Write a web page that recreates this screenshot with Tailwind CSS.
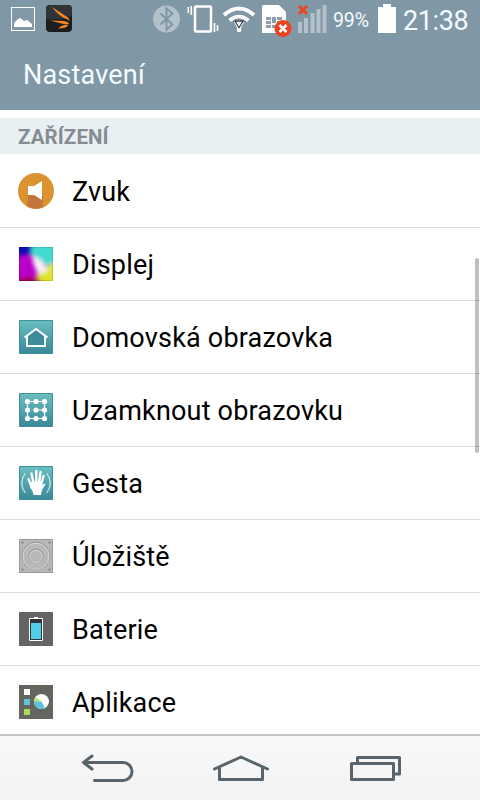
<!DOCTYPE html>
<html lang="cs">
<head>
<meta charset="utf-8">
<title>Nastavení</title>
<script src="https://cdn.jsdelivr.net/npm/@tailwindcss/browser@4"></script>
</head>
<body class="w-[480px] h-[800px] overflow-hidden bg-white font-[Roboto,'Noto_Sans',sans-serif]">
<div class="relative flex flex-col h-[800px] w-[480px] overflow-hidden">
  <header class="h-[110px] shrink-0 bg-[#8097a6] text-[#f3fbff]">
    <div class="flex h-[39px] items-start">
      <svg class="ml-[11px] mt-[7px] shrink-0" width="24" height="24" viewBox="0 0 24 24"><rect x=".5" y=".5" width="23" height="23" fill="#8499a7" stroke="#f7fcff"/><path d="M3 20v-4l4-4 2-1 4 3 3-1 5 4v3z" fill="#fff"/></svg>
      <svg class="ml-[11px] mt-[5px] shrink-0" width="26" height="27" viewBox="0 0 26 27"><rect width="26" height="27" rx="4" fill="#1b1d1f"/><path d="M0 12V4q0-4 4-4h18q4 0 4 4v7q-12 5-26 3z" fill="#303437"/><path d="M6 2l16 10.500q1.500 1.500 1.500 3.500-2-2-5.500-3Q11 9 6 2zM4 15.500l14 .5q4 .5 5.500 2.500-4 1.500-8 0zM22.500 19.500q-1.500 3-4.500 3.500-3 0-6 1l3-3q3-1.500 7.500-1.500z" fill="#f5861f"/></svg>
      <svg class="ml-[81px] mt-[5px] shrink-0" width="27" height="28" viewBox="0 0 27 28"><circle cx="13.500" cy="14" r="13.500" fill="#b3c1ca"/><path d="M7.500 8.500l12 11-6 5v-21l6 5-12 11" fill="none" stroke="#8097a6" stroke-width="2"/></svg>
      <svg class="ml-[7px] mt-[5px] shrink-0" width="32" height="28" viewBox="0 0 32 28" fill="none" stroke="#fff"><rect x="8" y="1.500" width="16" height="25" rx="1" stroke-width="2.500"/><path d="M1.300 2v6M4.300 1v9M27.500 18v9M30.500 20v6" stroke-width="1.600"/></svg>
      <svg class="ml-[3px] mt-[5px] shrink-0" width="34" height="28" viewBox="0 0 34 28" fill="none" stroke="#fff"><path d="M2 10q15-13 30 0" stroke-width="4"/><path d="M7.500 15.500q9.500-8 19 0" stroke-width="3.600"/><path d="M12 17q5-3 10 0l-5 9.500z" fill="#fff" stroke="none"/><circle cx="17" cy="25" r="2.300" fill="#fff" stroke="none"/><path d="M13 16.200h8l-4 6.500z" fill="#f3f7f9" stroke="#30383c" stroke-width="1.200"/></svg>
      <svg class="ml-[6px] mt-[5px] shrink-0" width="30" height="33" viewBox="0 0 30 33"><path d="M2 0h15l7 7v21H0V2q0-2 2-2z" fill="#fff"/><path d="M4 12h5v3H4zM10 12h4v6h-4zM15 12h5v3h-5zM4 16h5v3H4zM4 20h5v3H4zM10 20h4v3h-4zM15 16h5v7h-5z" fill="#8ca0ad"/><circle cx="21" cy="23.500" r="8.500" fill="#ef4320"/><path d="M17.500 20l7 7m0-7l-7 7" stroke="#fff" stroke-width="2.500"/></svg>
      <svg class="ml-[6px] mt-[5px] shrink-0" width="29" height="28" viewBox="0 0 29 28"><path d="M0 17h4v11H0zM6 13h4v15H6zM12.500 8h4v20h-4zM18.500 4h4v24h-4zM24.500 0h4v28h-4z" fill="#b3c1ca"/><path d="M1 1l8 8m0-8L1 9" stroke="#ef4320" stroke-width="2.800"/></svg>
      <div class="ml-[6px] mt-[9px] w-[45px] text-[19.500px] leading-[24px] tracking-[-0.1px]">99%</div>
      <svg class="mt-[4px] shrink-0" width="18" height="29" viewBox="0 0 18 29"><path d="M5 0h8v3h5v26H0V3h5z" fill="#fff"/></svg>
      <div class="ml-[7px] mt-[6px] text-[27px] leading-[30px] tracking-[-0.4px]">21:38</div>
    </div>
    <h1 class="pl-[23px] pt-[20px] text-[27px] leading-[32px] tracking-[0.2px]">Nastavení</h1>
  </header>
  <main class="relative h-[624px] shrink-0 overflow-hidden pt-[8px]">
    <h2 class="h-[36px] bg-[#e9f0f4] pl-[18px] text-[20.5px] font-bold leading-[38px] tracking-[0.1px] text-[#858d93] mb-px">ZAŘÍZENÍ</h2>
    <ul class="text-[27px] leading-[32px] tracking-[0.19px] text-black">
      <li class="flex h-[73px] items-center gap-[18px] border-b border-[#dcdcdc] pl-[18px]">
        <svg width="36" height="36" viewBox="0 0 36 36"><circle cx="18" cy="18" r="18" fill="#db932f"/><path d="M10 22v5q-1 4-1 6 8 5 16 1V23z" fill="#c4753a"/><path d="M10 13h6l8-5v19l-8-5h-6z" fill="#fff"/></svg><span class="pt-[2px]">Zvuk</span></li>
      <li class="flex h-[73px] items-center gap-[19px] border-b border-[#dcdcdc] pl-[19px]">
        <svg width="34" height="34" viewBox="0 0 34 34"><defs><filter id="b" x="-30%" y="-30%" width="160%" height="160%"><feGaussianBlur stdDeviation="2"/></filter><clipPath id="c"><path d="M0 0h34v34H0z"/></clipPath></defs><g clip-path="url(#c)"><path d="M0 0h34v34H0z" fill="#b900c9"/><g filter="url(#b)"><path d="M-6-6h20L12 7-6 9z" fill="#0808b4"/><path d="M13-6h27v32L12 9z" fill="#43d9d1"/><path d="M34 16l6-1v26H20l-3-16z" fill="#dce42b"/><path d="M-5 33l18-2 9 3v7H-5z" fill="#9c0030"/><path d="M13 9l6 2q7 5 10 13l-9 3q-6-7-7-18z" fill="#f7f0f8"/></g></g><path d="M.5.500h33v33H.5z" fill="none" stroke="#000" stroke-opacity=".12"/></svg><span class="pt-[2px]">Displej</span></li>
      <li class="flex h-[73px] items-center gap-[19px] border-b border-[#dcdcdc] pl-[19px]">
        <svg width="34" height="34" viewBox="0 0 34 34"><defs><linearGradient id="t" x2="0" y2="1"><stop stop-color="#6abfc1"/><stop offset="1" stop-color="#39889a"/></linearGradient></defs><path d="M.5.500h33v33H.5z" fill="url(#t)" stroke="#438f97"/><path d="M8 16v10h18V16l-9-7z" fill="#3e8b99"/><path d="M5.500 17.500L17 9l11.500 8.500M8 16v10h18V16" fill="none" stroke="#fff" stroke-width="2"/></svg><span class="pt-[2px]">Domovská obrazovka</span></li>
      <li class="flex h-[73px] items-center gap-[19px] border-b border-[#dcdcdc] pl-[19px]">
        <svg width="34" height="34" viewBox="0 0 34 34"><path d="M.5.500h33v33H.5z" fill="url(#t)" stroke="#438f97"/><path d="M8.500 17V8.500h17M17 17h8.500v8.500h-17V17M25.500 8.500V17" fill="none" stroke="#fff" stroke-width="1.200"/><g fill="#fff"><circle cx="8.500" cy="8.500" r="2.600"/><circle cx="17" cy="8.500" r="2.600"/><circle cx="25.500" cy="8.500" r="2.600"/><circle cx="8.500" cy="17" r="2.600"/><circle cx="17" cy="17" r="2.600"/><circle cx="25.500" cy="17" r="2.600"/><circle cx="8.500" cy="25.500" r="2.600"/><circle cx="17" cy="25.500" r="2.600"/><circle cx="25.500" cy="25.500" r="2.600"/></g></svg><span class="pt-[2px]">Uzamknout obrazovku</span></li>
      <li class="flex h-[73px] items-center gap-[19px] border-b border-[#dcdcdc] pl-[19px]">
        <svg width="34" height="34" viewBox="0 0 34 34"><path d="M.5.500h33v33H.5z" fill="url(#t)" stroke="#438f97"/><g stroke="#fff" stroke-linecap="round" fill="none"><path d="M14.500 17L12.500 7.500M17.300 16V5M20 17l1.500-11M22 19l2.500-9M13 22l-3.500-9" stroke-width="2.400"/><path d="M6 7.500q-6.500 9.500 0 19M28 7.500q6.500 9.500 0 19" stroke="#c9e9ea" stroke-width="1.200"/></g><path d="M11 16l12-1-.3 5 2.300-2.500 1.500.5-3.500 6-1 5h-7.500l-1-4q-2.500-3-2.500-6z" fill="#fff"/></svg><span class="pt-[2px]">Gesta</span></li>
      <li class="flex h-[73px] items-center gap-[19px] border-b border-[#dcdcdc] pl-[19px]">
        <svg width="34" height="34" viewBox="0 0 34 34" fill="none"><path d="M.5.500h33v33H.5z" fill="#b8b8b8" stroke="#999"/><circle cx="17" cy="17" r="14" stroke="#8f8f8f"/><circle cx="17" cy="17.300" r="13.200" stroke="#e0e0e0" stroke-width=".8"/><circle cx="17" cy="17" r="7" stroke="#929292"/><circle cx="17" cy="17.500" r="6.300" stroke="#dedede" stroke-width=".8"/><g fill="#999"><circle cx="3.500" cy="3.500" r="1.500"/><circle cx="30.500" cy="3.500" r="1.500"/><circle cx="3.500" cy="30.500" r="1.500"/><circle cx="30.500" cy="30.500" r="1.500"/></g></svg><span class="pt-[2px]">Úložiště</span></li>
      <li class="flex h-[73px] items-center gap-[19px] border-b border-[#dcdcdc] pl-[19px]">
        <svg width="34" height="34" viewBox="0 0 34 34"><path d="M0 0h34v34H0z" fill="#646464"/><path d="M15 5h4v2h-4z" fill="#fff"/><path d="M10.500 6.500h13v22h-13z" fill="#303338" stroke="#fff"/><path d="M12 11h10v16H12z" fill="#50cde8"/></svg><span class="pt-[2px]">Baterie</span></li>
      <li class="flex h-[73px] items-center gap-[19px] border-b border-transparent pl-[19px]">
        <svg width="34" height="34" viewBox="0 0 34 34"><path d="M0 0h34v34H0z" fill="#62665f"/><path d="M5 4h6v6H5z" fill="#fff"/><path d="M5 14h6v6H5z" fill="#62c2dc"/><path d="M5 24h6v6H5z" fill="#acd95c"/><circle cx="22.500" cy="16.500" r="7.500" fill="#fff"/><path d="M22.500 16.500l3.500 6.700a7.500 7.500 0 0 1-11-7.200z" fill="#5cc3dc"/><path d="M22.500 16.500l-7.500-.3q0-2 1.300-4z" fill="#b6df68"/></svg><span class="pt-[2px]">Aplikace</span></li>
    </ul>
    <div class="absolute left-[475px] top-[148px] h-[195px] w-[4px] rounded-full bg-black/25"></div>
  </main>
  <nav class="h-[66px] shrink-0 border-t-2 border-[#c5c6c8] bg-linear-to-b from-[#f8f8f8] to-[#f3f3f3] flex items-start pt-[18px] pl-[81px]">
    <svg width="53" height="29" viewBox="0 0 53 29" fill="none" stroke="#59646c" stroke-width="3" stroke-linecap="round" stroke-linejoin="round"><path d="M11 2L2.500 8.500 11 15M2.500 8.500H42a9 9 0 0 1 0 18H13.500"/></svg>
    <svg class="ml-[78px]" width="58" height="29" viewBox="0 0 58 29" fill="none" stroke="#59646c" stroke-width="3" stroke-linecap="round" stroke-linejoin="round"><path d="M2.500 15L29 3l26.500 12M7.500 14v11.500h43V14"/></svg>
    <svg class="ml-[80px]" width="51" height="29" viewBox="0 0 51 29" fill="none" stroke="#59646c" stroke-width="3" stroke-linejoin="round"><path d="M7.500 9V3.500h42V20H45M1.500 9.500h42v16h-42z"/></svg>
  </nav>
</div>
</body>
</html>
